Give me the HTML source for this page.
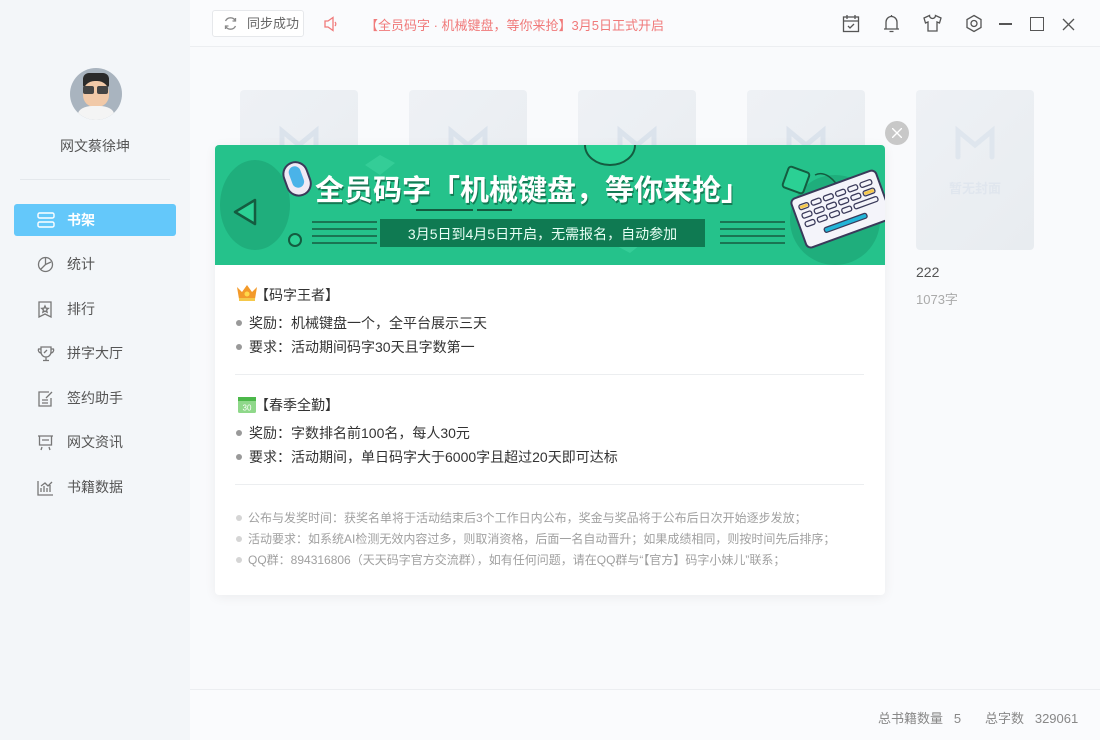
<!DOCTYPE html>
<html><head><meta charset="utf-8">
<style>
*{margin:0;padding:0;box-sizing:border-box}
body{width:1100px;height:740px;overflow:hidden;font-family:"Liberation Sans","Noto Sans CJK SC",sans-serif;background:#f9fafc;position:relative;color:#333}
.side{position:absolute;left:0;top:0;width:190px;height:740px;background:#f3f6f9}
.avatar{position:absolute;left:70px;top:68px;width:52px;height:52px;border-radius:50%;background:#a9b4bf;overflow:hidden}
.name{position:absolute;left:0;width:190px;top:136px;text-align:center;font-size:14px;color:#555}
.sep{position:absolute;left:20px;width:150px;top:179px;height:1px;background:#e4e8ec}
.menu{position:absolute;left:14px;width:162px;height:32px;font-size:14px;color:#555;line-height:32px;padding-left:53px}
.menu svg{position:absolute;left:23px;top:8px}
.menu.act{background:#64c8fa;color:#fff;font-weight:bold;border-radius:3px}
.top{position:absolute;left:190px;top:0;right:0;height:47px;border-bottom:1px solid #eceef1;background:#fafbfd}
.sync{position:absolute;left:22px;top:10px;width:92px;height:27px;border:1px solid #e6e8eb;border-radius:3px;background:#fff;font-size:13px;color:#666;line-height:25px;padding-left:34px}
.notice{position:absolute;left:175px;top:15px;font-size:13px;color:#f07a7a}
.book{position:absolute;top:90px;width:118px;height:160px;background:linear-gradient(135deg,#eef1f5,#e8ecf0);border-radius:4px}
.book .m{position:absolute;left:38px;top:35px}
.foot{position:absolute;left:190px;right:0;top:689px;height:51px;border-top:1px solid #eceef1;background:#fafbfd;font-size:13px;color:#888}
.modal{position:absolute;left:215px;top:145px;width:670px;height:450px;background:#fff;border-radius:4px;overflow:hidden;box-shadow:0 2px 12px rgba(0,0,0,.06)}
.banner{position:absolute;left:0;top:0;width:670px;height:120px;background:#25c28b;overflow:hidden}
.sec{position:absolute;left:20px;font-size:14px;color:#333}
.li{position:absolute;left:20px;font-size:14px;color:#333;padding-left:14px}
.li:before{content:"";position:absolute;left:1px;top:7px;width:6px;height:6px;border-radius:50%;background:#999}
.hr{position:absolute;left:20px;width:629px;height:1px;background:#eceef0}
.sm{position:absolute;left:20px;font-size:12px;color:#a0a0a0;padding-left:13px}
.sm:before{content:"";position:absolute;left:1px;top:6px;width:6px;height:6px;border-radius:50%;background:#d5d5d5}
.close{position:absolute;left:885px;top:121px;width:24px;height:24px;border-radius:50%;background:#c8c8c8}
</style></head><body>
<div class="side">
 <div class="avatar">
  <div style="position:absolute;left:13px;top:5px;width:26px;height:14px;background:#2b2b2b;border-radius:6px 6px 2px 2px"></div>
  <div style="position:absolute;left:13px;top:13px;width:26px;height:26px;background:#f1c9a8;border-radius:45%"></div>
  <div style="position:absolute;left:13px;top:18px;width:11px;height:8px;background:#444;border-radius:2px"></div>
  <div style="position:absolute;left:27px;top:18px;width:11px;height:8px;background:#444;border-radius:2px"></div>
  <div style="position:absolute;left:8px;top:38px;width:36px;height:20px;background:#f4f4f4;border-radius:40% 40% 0 0"></div>
 </div>
 <div class="name">网文蔡徐坤</div>
 <div class="sep"></div>
 <div class="menu act" style="top:204px"><svg width="18" height="16" viewBox="0 0 18 16" fill="none" stroke="#fff" stroke-width="1.4"><rect x="1" y="1" width="16" height="5" rx="1.5"/><rect x="1" y="10" width="16" height="5" rx="1.5"/></svg>书架</div>
 <div class="menu" style="top:248px"><svg width="17" height="17" viewBox="0 0 17 17" fill="none" stroke="#777" stroke-width="1.3"><circle cx="8.5" cy="8.5" r="7"/><path d="M8.5 1.5V8.5L14 6M8.5 8.5L3.5 13.5"/></svg>统计</div>
 <div class="menu" style="top:293px"><svg width="16" height="17" viewBox="0 0 16 17" fill="none" stroke="#777" stroke-width="1.3"><path d="M2 1h12v15l-6-3-6 3z"/><path d="M8 5l1 2.2 2.3.2-1.7 1.5.5 2.3L8 10l-2.1 1.2.5-2.3-1.7-1.5 2.3-.2z"/></svg>排行</div>
 <div class="menu" style="top:337px"><svg width="18" height="17" viewBox="0 0 18 17" fill="none" stroke="#777" stroke-width="1.3"><path d="M4 2h10v5a5 5 0 0 1-10 0zM4 4H1.5a3 3 0 0 0 2.8 4M14 4h2.5a3 3 0 0 1-2.8 4M9 12v3M6 15.5h6M7 8l3-3"/></svg>拼字大厅</div>
 <div class="menu" style="top:382px"><svg width="17" height="17" viewBox="0 0 17 17" fill="none" stroke="#777" stroke-width="1.3"><path d="M12 2H2v14h12V8M5 10h6M5 13h6M9 8l6-6"/></svg>签约助手</div>
 <div class="menu" style="top:426px"><svg width="17" height="17" viewBox="0 0 17 17" fill="none" stroke="#777" stroke-width="1.3"><path d="M1 2h15M2.5 2v9h12V2M5 6h7M5 13l-1 3M12 13l1 3"/></svg>网文资讯</div>
 <div class="menu" style="top:471px"><svg width="17" height="17" viewBox="0 0 17 17" fill="none" stroke="#777" stroke-width="1.3"><path d="M1 2v14h15M4 13V9M7 13V7M10 13V9M13 13V6M4 7l4-3 3 3 4-4"/></svg>书籍数据</div>
</div>
<div class="top">
 <div class="sync"><svg style="position:absolute;left:10px;top:5px" width="15" height="15" viewBox="0 0 15 15" fill="none" stroke="#888" stroke-width="1.3"><path d="M12.5 5A5.5 5.5 0 0 0 2.5 5M2.5 10a5.5 5.5 0 0 0 10 0"/><path d="M12.5 2v3h-3M2.5 13v-3h3"/></svg>同步成功</div>
 <svg style="position:absolute;left:134px;top:16px" width="14" height="16" viewBox="0 0 14 16" fill="none" stroke="#f07a7a" stroke-width="1.3"><path d="M1 5h3l5-3.5v13L4 11H1z"/><path d="M11 6a3 3 0 0 1 0 4"/></svg>
 <div class="notice">【全员码字 · 机械键盘，等你来抢】3月5日正式开启</div>
 <svg style="position:absolute;left:652px;top:14px" width="18" height="19" viewBox="0 0 18 19" fill="none" stroke="#555" stroke-width="1.3"><rect x="1.5" y="3" width="15" height="14.5"/><path d="M1.5 7h15M5 1v4M13 1v4M6 12l2 2 4-4"/></svg>
 <svg style="position:absolute;left:693px;top:14px" width="17" height="19" viewBox="0 0 17 19" fill="none" stroke="#555" stroke-width="1.3"><path d="M3 15V8a5.5 5.5 0 0 1 11 0v7M1 15h15M6.5 17.5h4M8.5 1v1.5"/></svg>
 <svg style="position:absolute;left:733px;top:14px" width="19" height="18" viewBox="0 0 19 18" fill="none" stroke="#555" stroke-width="1.3"><path d="M6.5 1.5L1 4l1.5 5 2.5-1v9h9V8l2.5 1L18 4l-5.5-2.5a3 3 0 0 1-6 0z"/></svg>
 <svg style="position:absolute;left:775px;top:14px" width="18" height="19" viewBox="0 0 18 19" fill="none" stroke="#555" stroke-width="1.3"><path d="M9 1.5l7 4v8l-7 4-7-4v-8z"/><circle cx="9" cy="9.5" r="3"/></svg>
 <div style="position:absolute;left:809px;top:23px;width:13px;height:1.5px;background:#555"></div>
 <div style="position:absolute;left:840px;top:17px;width:14px;height:14px;border:1.4px solid #555"></div>
 <svg style="position:absolute;left:872px;top:18px" width="13" height="13" viewBox="0 0 13 13" stroke="#555" stroke-width="1.3"><path d="M1 1l11 11M12 1L1 12"/></svg>
</div>

<div class="book" style="left:240px"><svg class="m" width="42" height="36" viewBox="0 0 42 36" fill="none" stroke="#dbe3ec" stroke-width="5" stroke-linecap="round"><path d="M4 32V6l17 14L38 6v26"/></svg></div>
<div class="book" style="left:409px"><svg class="m" width="42" height="36" viewBox="0 0 42 36" fill="none" stroke="#dbe3ec" stroke-width="5" stroke-linecap="round"><path d="M4 32V6l17 14L38 6v26"/></svg></div>
<div class="book" style="left:578px"><svg class="m" width="42" height="36" viewBox="0 0 42 36" fill="none" stroke="#dbe3ec" stroke-width="5" stroke-linecap="round"><path d="M4 32V6l17 14L38 6v26"/></svg></div>
<div class="book" style="left:747px"><svg class="m" width="42" height="36" viewBox="0 0 42 36" fill="none" stroke="#dbe3ec" stroke-width="5" stroke-linecap="round"><path d="M4 32V6l17 14L38 6v26"/></svg></div>
<div class="book" style="left:916px"><svg class="m" width="42" height="36" viewBox="0 0 42 36" fill="none" stroke="#dfe6ee" stroke-width="5" stroke-linecap="round"><path d="M4 32V6l17 14L38 6v26"/></svg><div style="position:absolute;top:88px;width:118px;text-align:center;font-size:13px;font-weight:bold;color:#e0e6ee">暂无封面</div></div>
<div style="position:absolute;left:916px;top:264px;font-size:14px;color:#555">222</div>
<div style="position:absolute;left:916px;top:289px;font-size:13px;color:#aaa">1073字</div>

<div class="foot"><span style="position:absolute;left:688px;top:18px">总书籍数量&nbsp;&nbsp;&nbsp;5</span><span style="position:absolute;left:795px;top:18px">总字数&nbsp;&nbsp;&nbsp;329061</span></div>

<div class="close"><svg style="position:absolute;left:7px;top:7px" width="10" height="10" viewBox="0 0 10 10" stroke="#fff" stroke-width="1.4"><path d="M0 0l10 10M10 0L0 10"/></svg></div>

<div class="modal">
 <div class="banner">
  <svg width="670" height="120" style="position:absolute;left:0;top:0">
   <ellipse cx="40" cy="60" rx="35" ry="45" fill="#1fae7c"/>
   <ellipse cx="620" cy="75" rx="45" ry="45" fill="#1fae7c"/>
   <path d="M370 0a25 20 0 0 0 50 0" fill="#2bd094" stroke="#145c40" stroke-width="2"/>
   <path d="M40 55l-20 12 20 12z" fill="#2bd094" stroke="#145c40" stroke-width="2.5" stroke-linejoin="round"/>
   <circle cx="80" cy="95" r="6" fill="#2bd094" stroke="#145c40" stroke-width="2"/>
   <path d="M150 20l15-10 15 8-15 12z M400 100l15-12 15 8-15 12z" fill="#3fd3a0" opacity=".6"/>
   <g fill="#1a7553">
    <rect x="97" y="76" width="65" height="2"/><rect x="97" y="83" width="65" height="2"/><rect x="97" y="90" width="65" height="2"/><rect x="97" y="97" width="65" height="2"/>
    <rect x="505" y="76" width="65" height="2"/><rect x="505" y="83" width="65" height="2"/><rect x="505" y="90" width="65" height="2"/><rect x="505" y="97" width="65" height="2"/>
   </g>
   <rect x="165" y="74" width="325" height="28" fill="#0f7a52"/>
   <rect x="201" y="64" width="14" height="2" fill="#145c40"/><rect x="213" y="64" width="45" height="2" fill="#145c40"/><rect x="262" y="64" width="35" height="2" fill="#145c40"/>
   <g transform="translate(65,22) rotate(-20)"><rect x="0" y="0" width="24" height="34" rx="12" fill="#f0eaf5" stroke="#3a3a5a" stroke-width="2"/><rect x="6" y="4" width="12" height="22" rx="6" fill="#4ab3e8"/></g>
   <rect x="570" y="24" width="22" height="22" rx="3" transform="rotate(20 581 35)" fill="#2bd094" stroke="#145c40" stroke-width="2"/>
   <path d="M600 30c10-5 20 5 25 15" fill="none" stroke="#145c40" stroke-width="1.5"/>
   <g transform="translate(575,55) rotate(-20)">
    <rect x="0" y="0" width="90" height="52" rx="5" fill="#f4f4fa" stroke="#3a3a5a" stroke-width="2"/>
    <g fill="none" stroke="#3a3a5a" stroke-width="1.3">
     <rect x="6" y="8" width="10" height="5" rx="2"/><rect x="19" y="8" width="10" height="5" rx="2"/><rect x="32" y="8" width="10" height="5" rx="2"/><rect x="45" y="8" width="10" height="5" rx="2"/><rect x="58" y="8" width="10" height="5" rx="2"/><rect x="71" y="8" width="12" height="5" rx="2"/>
     <rect x="6" y="17" width="10" height="5" rx="2"/><rect x="19" y="17" width="10" height="5" rx="2"/><rect x="32" y="17" width="10" height="5" rx="2"/><rect x="45" y="17" width="10" height="5" rx="2"/><rect x="58" y="17" width="10" height="5" rx="2"/><rect x="71" y="17" width="12" height="5" rx="2"/>
     <rect x="6" y="26" width="10" height="5" rx="2"/><rect x="19" y="26" width="10" height="5" rx="2"/><rect x="32" y="26" width="10" height="5" rx="2"/><rect x="45" y="26" width="10" height="5" rx="2"/><rect x="58" y="26" width="25" height="5" rx="2"/>
    </g>
    <rect x="7" y="9" width="8" height="3" fill="#f5c84a"/><rect x="72" y="18" width="10" height="3" fill="#f5c84a"/>
    <rect x="22" y="38" width="45" height="5" rx="2" fill="#22b5d8" stroke="#3a3a5a" stroke-width="1.3"/>
   </g>
  </svg>
  <div style="position:absolute;left:100px;top:22px;font-size:29px;font-weight:bold;color:#fff;text-shadow:1px 2px 0 #147a54;white-space:nowrap">全员码字「机械键盘，等你来抢」</div>
  <div style="position:absolute;left:165px;top:79px;width:325px;text-align:center;font-size:14px;color:#e8fff5">3月5日到4月5日开启，无需报名，自动参加</div>
 </div>
 <svg style="position:absolute;left:21px;top:139px" width="22" height="18" viewBox="0 0 22 18"><path d="M1 3l5 5 5-7 5 7 5-5-2 12H3z" fill="#f39a2a"/><rect x="3" y="14" width="16" height="3" fill="#f5c84a"/><circle cx="11" cy="10" r="2.5" fill="#ffd94a"/></svg>
 <div class="sec" style="left:40px;top:140px">【码字王者】</div>
 <div class="li" style="top:168px">奖励：机械键盘一个，全平台展示三天</div>
 <div class="li" style="top:192px">要求：活动期间码字30天且字数第一</div>
 <div class="hr" style="top:229px"></div>
 <svg style="position:absolute;left:23px;top:250px" width="18" height="18" viewBox="0 0 18 18"><rect x="0" y="2" width="18" height="16" rx="1.5" fill="#8fd88a"/><rect x="0" y="2" width="18" height="4" fill="#4cb84a"/><text x="9" y="15.5" font-size="8" text-anchor="middle" fill="#fff" font-family="Liberation Sans">30</text></svg>
 <div class="sec" style="left:40px;top:250px">【春季全勤】</div>
 <div class="li" style="top:278px">奖励：字数排名前100名，每人30元</div>
 <div class="li" style="top:302px">要求：活动期间，单日码字大于6000字且超过20天即可达标</div>
 <div class="hr" style="top:339px"></div>
 <div class="sm" style="top:364px">公布与发奖时间：获奖名单将于活动结束后3个工作日内公布，奖金与奖品将于公布后日次开始逐步发放；</div>
 <div class="sm" style="top:385px">活动要求：如系统AI检测无效内容过多，则取消资格，后面一名自动晋升；如果成绩相同，则按时间先后排序；</div>
 <div class="sm" style="top:406px">QQ群：894316806（天天码字官方交流群），如有任何问题，请在QQ群与“【官方】码字小妹儿”联系；</div>
</div>
</body></html>
